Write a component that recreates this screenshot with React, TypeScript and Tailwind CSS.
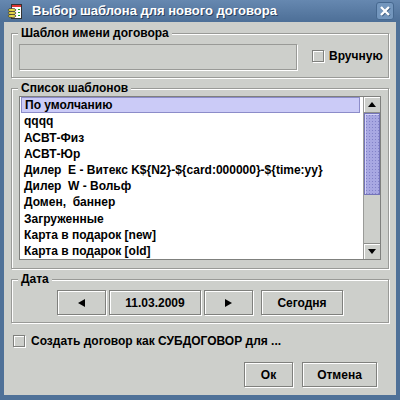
import React from 'react';

const templates = [
  "По умолчанию",
  "qqqq",
  "АСВТ-Физ",
  "АСВТ-Юр",
  "Дилер  E - Витекс K${N2}-${card:000000}-${time:yy}",
  "Дилер  W - Вольф",
  "Домен,  баннер",
  "Загруженные",
  "Карта в подарок [new]",
  "Карта в подарок [old]",
];

const font = { fontFamily: '"Liberation Sans", Arial, sans-serif' };

const Btn = ({ w, children }: { w: string; children: React.ReactNode }) => (
  <div
    className={`${w} h-[25px] flex items-center justify-center border border-[#7f807d] shadow-[inset_1px_1px_0_#fff,1px_1px_0_#fff] text-[12px] font-bold text-black`}
  >
    {children}
  </div>
);

const Check = () => (
  <div className="shrink-0 w-[12px] h-[12px] border border-[#7f807d] shadow-[inset_1px_1px_0_#fff,1px_1px_0_#fff] bg-[#cdcfcb]" />
);

const Group = ({ label, className, children }: { label: string; className: string; children: React.ReactNode }) => (
  <div className={`relative border border-[#999a97] shadow-[inset_1px_1px_0_#fff,1px_1px_0_#fff] ${className}`}>
    <div className="absolute -top-[8px] left-[6px] px-[3px] bg-[#cdcfcb] text-[12px] leading-[14px] font-bold text-black">
      {label}
    </div>
    {children}
  </div>
);

const AppIcon = () => (
  <svg width="16" height="16" viewBox="0 0 16 16">
    <rect x="4.5" y="0.5" width="10" height="14" fill="#fff" stroke="#333" />
    <rect x="5" y="1" width="9" height="2" fill="#d33" />
    <rect x="11" y="5" width="2" height="1" fill="#2a2" />
    <rect x="11" y="8" width="2" height="1" fill="#2a2" />
    <rect x="11" y="11" width="2" height="1" fill="#2a2" />
    <ellipse cx="5" cy="6" rx="4" ry="1.6" fill="#e8d84a" stroke="#333" strokeWidth="0.7" />
    <ellipse cx="5" cy="9" rx="4" ry="1.6" fill="#e8d84a" stroke="#333" strokeWidth="0.7" />
    <ellipse cx="5" cy="12" rx="4" ry="1.6" fill="#e8d84a" stroke="#333" strokeWidth="0.7" />
  </svg>
);

export default function App() {
  return (
    <div className="w-[400px] h-[400px] bg-[#4f7198] flex flex-col" style={font}>
      {/* title bar */}
      <div className="h-[22px] flex items-center bg-gradient-to-b from-[#6688b0] to-[#4d6f97]">
        <div className="ml-[7px] mt-[1px]">
          <AppIcon />
        </div>
        <div className="ml-[9px] text-[13px] font-bold text-white [text-shadow:1px_1px_0_#2c4260]">
          Выбор шаблона для нового договора
        </div>
        <div className="ml-auto mr-[6px] w-[18px] h-[18px] rounded-[3px] border border-[#46688f] bg-[#7396bd] flex items-center justify-center">
          <svg width="12" height="12" viewBox="0 0 12 12">
            <path d="M2 2 L10 10 M10 2 L2 10" stroke="#3d5a7d" strokeWidth="2.6" transform="translate(0.7 0.7)" />
            <path d="M2 2 L10 10 M10 2 L2 10" stroke="#fff" strokeWidth="2.4" />
          </svg>
        </div>
      </div>

      {/* body */}
      <div className="flex-1 mx-[4px] mb-[5px] bg-[#cdcfcb] px-[7px] pt-[11px] flex flex-col text-black">
        <Group label="Шаблон имени договора" className="h-[45px] pl-[7px] pt-[10px] flex">
          <div className="w-[278px] h-[26px] border border-[#999a97] shadow-[1px_1px_0_#fff]" />
          <div className="ml-[15px] mt-[6px] flex items-center gap-[5px] h-[12px]">
            <Check />
            <span className="text-[12px] font-bold">Вручную</span>
          </div>
        </Group>

        <Group label="Список шаблонов" className="mt-[10px] h-[181px] px-[7px] pt-[7px]">
          <div className="h-[164px] border border-[#7f807d] bg-white flex">
            <div className="flex-1 min-w-0 flex flex-col pl-[1px]">
              {templates.map((t, i) => (
                <div
                  key={i}
                  className={`h-[16.3px] flex items-center pl-[3px] text-[12px] font-bold whitespace-pre overflow-hidden ${
                    i === 0 ? 'bg-[#cbcbf7] border border-[#8c8cc9] pl-[2px]' : ''
                  }`}
                >
                  {t}
                </div>
              ))}
            </div>
            {/* scrollbar */}
            <div className="shrink-0 w-[17px] ml-[3px] border-l border-[#9a9b98] bg-[#cdcfcb] flex flex-col">
              <div className="h-[16px] flex items-center justify-center border-b border-[#8d8e8b] shadow-[inset_1px_1px_0_#fff]">
                <svg width="8" height="5" viewBox="0 0 8 5"><path d="M0 5 L4 0 L8 5 Z" fill="#000" /></svg>
              </div>
              <div className="h-[82px] border border-[#7474b9] bg-[#a8a8e2] bg-[radial-gradient(#8282c8_0.8px,transparent_1px)] bg-[length:3px_3px] shadow-[inset_1px_1px_0_#d4d4f8]" />
              <div className="flex-1" />
              <div className="h-[16px] flex items-center justify-center border-t border-[#8d8e8b] shadow-[inset_1px_1px_0_#fff]">
                <svg width="8" height="5" viewBox="0 0 8 5"><path d="M0 0 L8 0 L4 5 Z" fill="#000" /></svg>
              </div>
            </div>
          </div>
        </Group>

        <Group label="Дата" className="mt-[10px] h-[44px] pt-[10px] pl-[45px] flex">
          <Btn w="w-[49px]">
            <svg width="7" height="8" viewBox="0 0 7 8"><path d="M7 0 L0 4 L7 8 Z" fill="#000" /></svg>
          </Btn>
          <div className="ml-[3px]">
            <Btn w="w-[92px]">11.03.2009</Btn>
          </div>
          <div className="ml-[3px]">
            <Btn w="w-[49px]">
              <svg width="7" height="8" viewBox="0 0 7 8"><path d="M0 0 L7 4 L0 8 Z" fill="#000" /></svg>
            </Btn>
          </div>
          <div className="ml-[8px]">
            <Btn w="w-[82px]">Сегодня</Btn>
          </div>
        </Group>

        <div className="mt-[10px] ml-[2px] h-[16px] flex items-center gap-[6px]">
          <Check />
          <span className="text-[12px] font-bold">Создать договор как СУБДОГОВОР для ...</span>
        </div>

        <div className="mt-[13px] flex justify-end gap-[9px] pr-[12px]">
          <Btn w="w-[49px]">Ок</Btn>
          <Btn w="w-[75px]">Отмена</Btn>
        </div>
      </div>
    </div>
  );
}
